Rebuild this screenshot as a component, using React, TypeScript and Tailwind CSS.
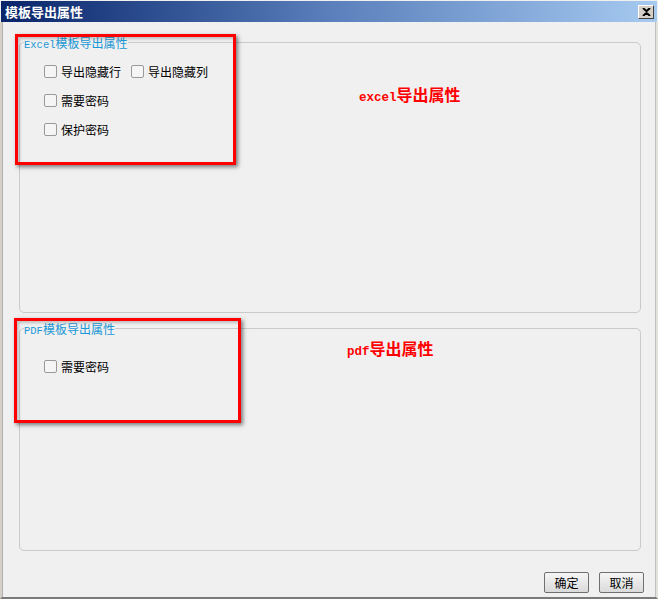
import React from "react";

const cjk = { fontFamily: '"Noto Sans CJK SC", "Noto Sans", sans-serif' };
const mono = { fontFamily: '"Liberation Mono", "DejaVu Sans Mono", monospace' };

function Check({ label }: { label: string }) {
  return (
    <label className="flex items-center h-[13px] text-[12px] leading-[13px] text-black" style={cjk}>
      <span className="w-[13px] h-[13px] border border-[#9a9a9a] rounded-[2px] bg-[#f5f5f5] mr-[4px] shrink-0" />
      <span>{label}</span>
    </label>
  );
}

function Legend({ latin, text }: { latin: string; text: string }) {
  return (
    <legend className="px-0 h-[12px] leading-[12px] text-[#1b98d5] whitespace-nowrap">
      <span className="text-[10.5px] align-baseline" style={mono}>{latin}</span>
      <span className="text-[12px] align-baseline" style={cjk}>{text}</span>
    </legend>
  );
}

function Btn({ label }: { label: string }) {
  return (
    <button
      className="w-[45px] h-[21px] border border-[#707070] rounded-[2px] bg-gradient-to-b from-[#f6f6f6] to-[#dadada] text-[12px] leading-[19px] text-black"
      style={cjk}
    >
      {label}
    </button>
  );
}

export default function App() {
  return (
    <div className="relative w-[658px] h-[599px] bg-[#f0f0f0] flex flex-col overflow-hidden">
      {/* Title bar */}
      <div className="h-[21px] mx-[1px] mt-[1px] flex items-center justify-between bg-gradient-to-r from-[#0a246a] via-[#5a7fbb] to-[#a6caf0] shrink-0">
        <span className="pl-[4px] text-white font-bold text-[13px] leading-[13px]" style={cjk}>
          模板导出属性
        </span>
        <div className="mr-[3px] w-[16px] h-[14px] bg-[#d4d0c8] border-t border-l border-t-white border-l-white border-r border-b border-r-[#404040] border-b-[#404040] flex items-center justify-center">
          <svg width="9" height="8" viewBox="0 0 9 8">
            <path d="M1 0 L4.5 3.2 L8 0 M1 8 L4.5 4.8 L8 8" stroke="#000" strokeWidth="2" fill="none" />
          </svg>
        </div>
      </div>

      {/* Body */}
      <div className="flex-1 flex flex-col border-l-[2px] border-l-[#d4d0c8] border-r-[2px] border-r-[#e4e2dc] border-b-[2px] border-b-[#7a7a7a]">
        <div className="flex-1 flex flex-col border-l border-l-[#b0b0b0] border-r border-r-[#c0c0c0]">
          <fieldset className="ml-[16px] mt-[14px] w-[622px] h-[277px] border border-[#cacaca] rounded-[5px] pl-[4px]">
            <Legend latin="Excel" text="模板导出属性" />
            <div className="ml-[20px] pt-[17px] flex flex-col gap-[16px]">
              <div className="flex gap-[10px]">
                <Check label="导出隐藏行" />
                <Check label="导出隐藏列" />
              </div>
              <Check label="需要密码" />
              <Check label="保护密码" />
            </div>
          </fieldset>

          <fieldset className="ml-[16px] mt-[9px] w-[622px] h-[229px] border border-[#cacaca] rounded-[5px] pl-[4px]">
            <Legend latin="PDF" text="模板导出属性" />
            <div className="ml-[20px] pt-[26px] flex flex-col">
              <Check label="需要密码" />
            </div>
          </fieldset>

          <div className="mt-[21px] flex justify-end gap-[10px] pr-[11px]">
            <Btn label="确定" />
            <Btn label="取消" />
          </div>
        </div>
      </div>

      {/* Annotations */}
      <div className="absolute left-[15px] top-[34px] w-[221px] h-[131px] border-[3px] border-[#ff0000] shadow-[2px_2px_4px_rgba(0,0,0,0.5),inset_2px_2px_3px_rgba(0,0,0,0.2)]" />
      <div className="absolute left-[14px] top-[318px] w-[227px] h-[105px] border-[3px] border-[#ff0000] shadow-[2px_2px_4px_rgba(0,0,0,0.5),inset_2px_2px_3px_rgba(0,0,0,0.2)]" />

      <div className="absolute left-[359px] top-[86px] flex items-baseline text-[#ff0000] font-bold leading-[16px]">
        <span className="text-[12.5px]" style={mono}>excel</span>
        <span className="text-[16px]" style={cjk}>导出属性</span>
      </div>
      <div className="absolute left-[347px] top-[340px] flex items-baseline text-[#ff0000] font-bold leading-[16px]">
        <span className="text-[12.5px]" style={mono}>pdf</span>
        <span className="text-[16px]" style={cjk}>导出属性</span>
      </div>
    </div>
  );
}
